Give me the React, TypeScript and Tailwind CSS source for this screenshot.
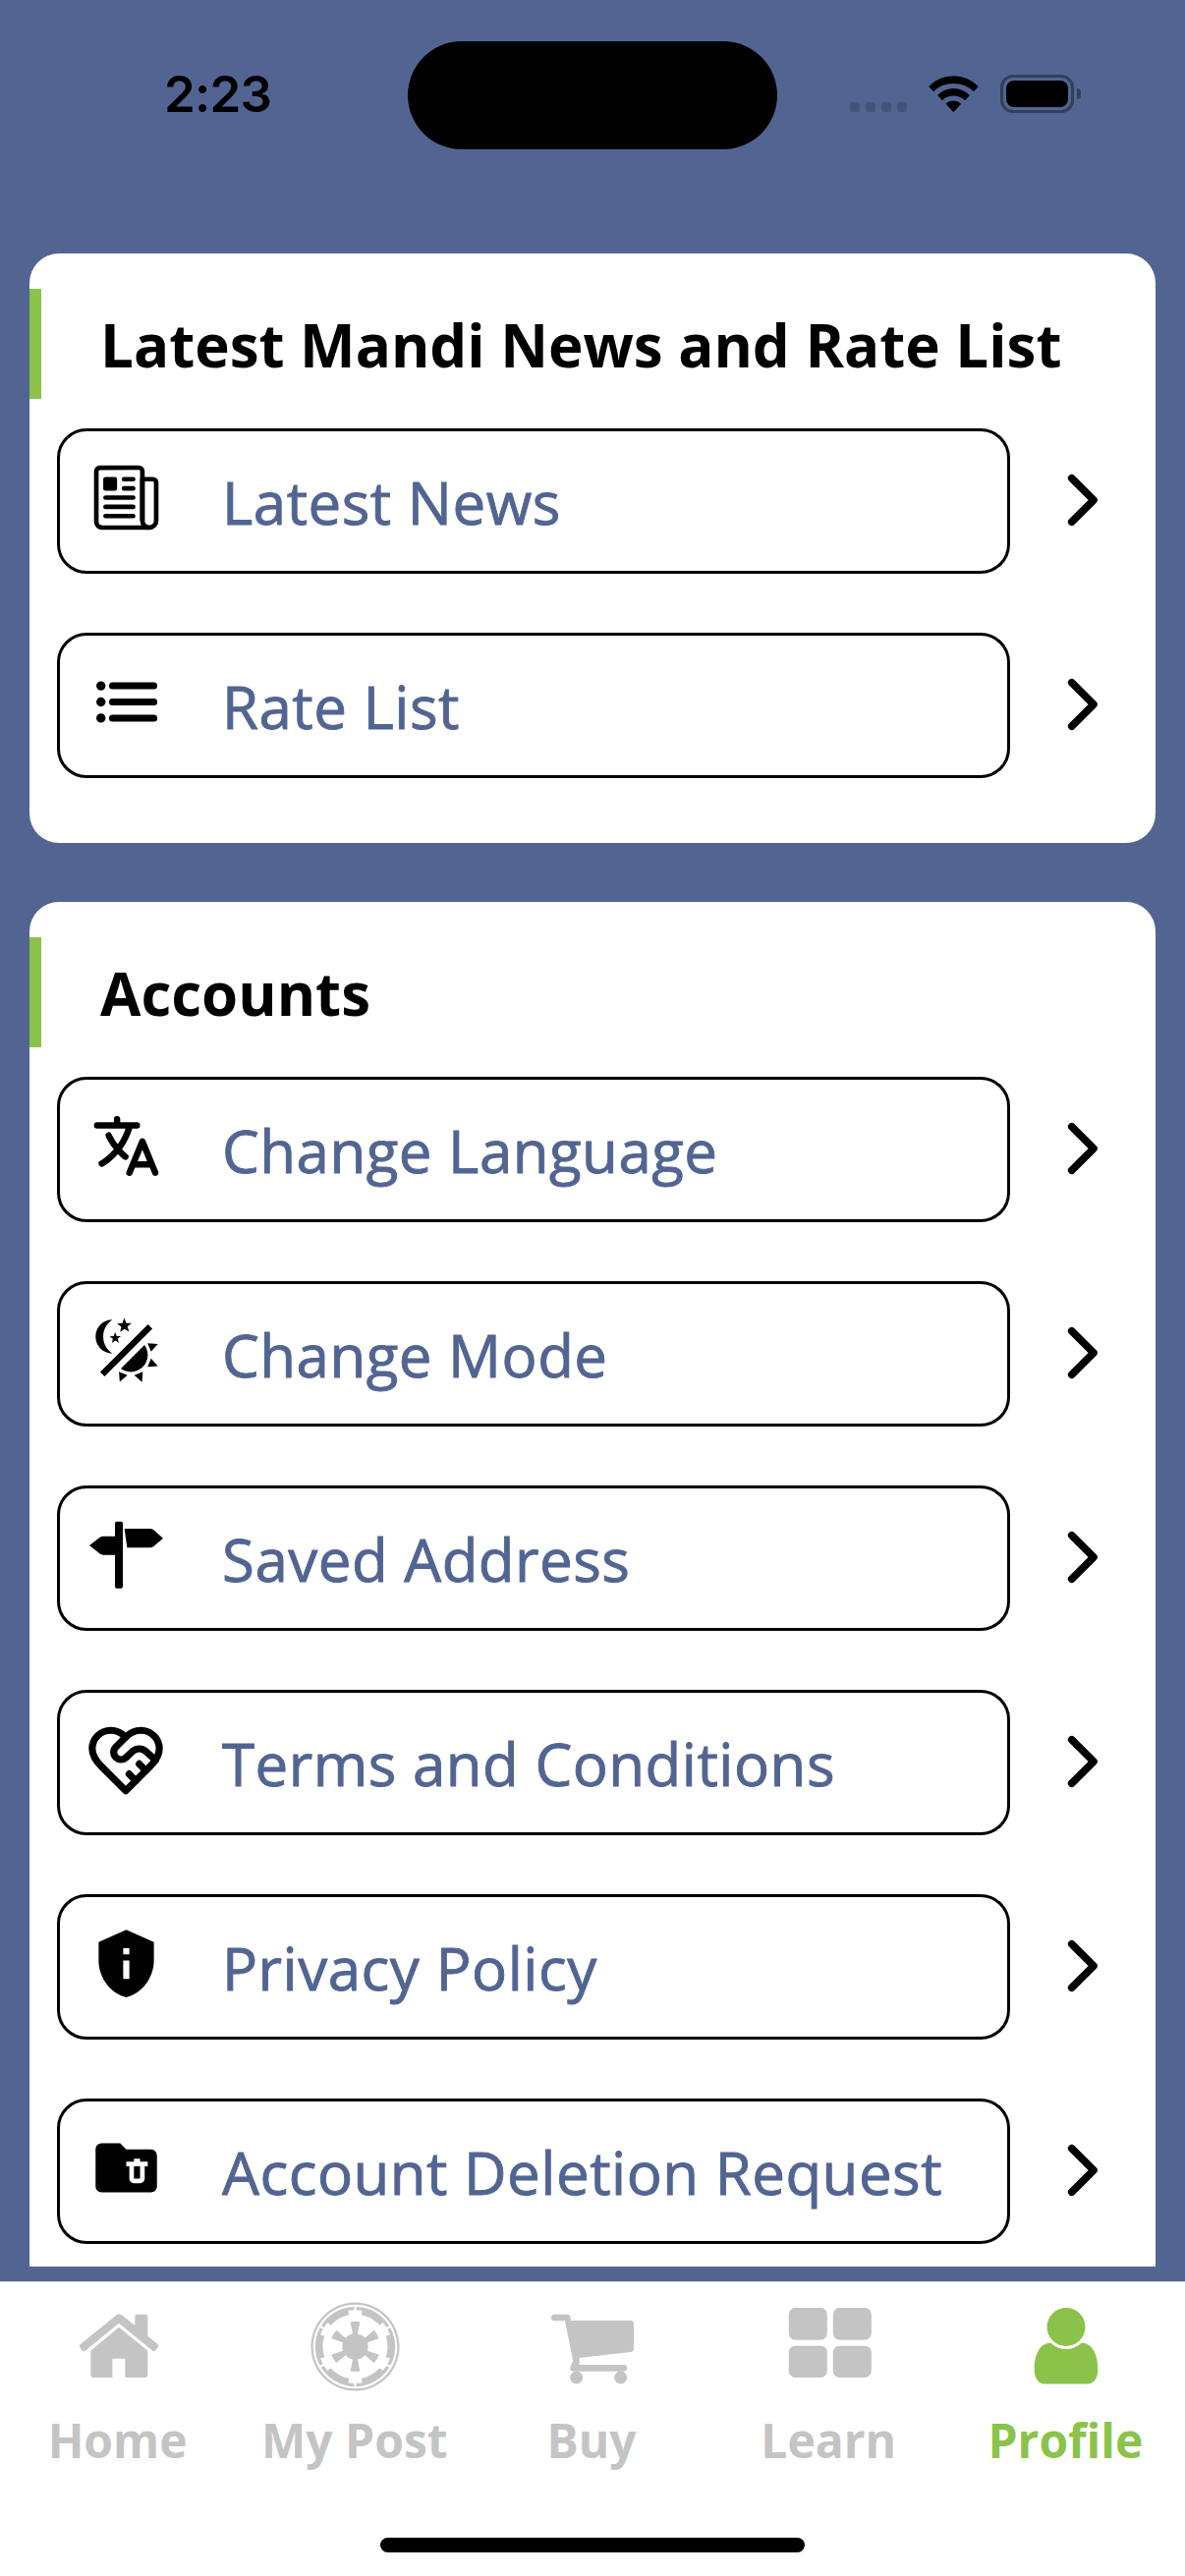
import type { ReactNode } from "react";
import { IoLanguage, IoList, IoNewspaperOutline } from "react-icons/io5";
import { MdFolderDelete, MdPrivacyTip } from "react-icons/md";
import { FaEmpire } from "react-icons/fa";
import { LuHeartHandshake } from "react-icons/lu";

type Item = { label: string; icon: ReactNode };

function LightDarkIcon() {
  return (
    <svg viewBox="0 0 24 24" className="size-[75px]" fill="currentColor">
      <path d="M7.5 2C5.71 3.15 4.5 5.18 4.5 7.5S5.71 11.85 7.53 13C4.46 13 2 10.54 2 7.5A5.5 5.5 0 0 1 7.5 2M19.07 3.5L20.5 4.93L4.93 20.5L3.5 19.07L19.07 3.5M12.89 5.93L11.41 5L9.97 6L10.39 4.3L9 3.24L10.75 3.12L11.33 1.47L12 3.1L13.73 3.13L12.38 4.26L12.89 5.93M9.59 9.54L8.43 8.81L7.31 9.59L7.65 8.27L6.56 7.44L7.92 7.35L8.37 6.06L8.88 7.33L10.24 7.36L9.19 8.23L9.59 9.54M19 13.5A5.5 5.5 0 0 1 13.5 19C12.28 19 11.15 18.6 10.24 17.93L17.93 10.24C18.6 11.15 19 12.28 19 13.5M14.6 20.08L17.37 18.93L17.13 22.28L14.6 20.08M18.93 17.38L20.08 14.61L22.28 17.15L18.93 17.38M20.08 12.42L18.94 9.64L22.28 9.88L20.08 12.42M9.63 18.93L12.4 20.08L9.87 22.27L9.63 18.93Z" />
    </svg>
  );
}

function SignpostIcon() {
  return (
    <svg viewBox="93 136 225 225" className="size-[75px]" fill="currentColor">
      <path d="M176 147H190Q195 147 195 152V346Q195 351 190 351H176Q171 351 171 346V249H135Q129 249 124 245L93 220L124 196Q129 192 135 192H171V152Q171 147 176 147Z" />
      <path d="M200 169H278Q284 169 288 172L318 198L289 223Q284 227 278 227H208Z" />
    </svg>
  );
}

function Chevron() {
  return (
    <svg viewBox="0 0 34 56" className="h-14 w-[34px]" fill="none" stroke="#000" strokeWidth="7.6" strokeLinecap="round" strokeLinejoin="round">
      <path d="M5.7 5.7L28 28L5.7 50.3" />
    </svg>
  );
}

function HomeIcon() {
  return (
    <svg viewBox="47 39 270 270" className="size-[90px]" fill="currentColor">
      <path d="M64 169L173 80Q182 73 192 80L231 111V83Q231 77 237 77H264Q270 77 270 83V143L301 169Q305 173 302 177L294 187Q290 192 285 188L182 104L79 188Q74 192 70 187L62 178Q59 173 64 169Z" />
      <path d="M182 116L270 188V260Q270 270 260 270H201V212H162V270H106Q96 270 96 260V188Z" />
    </svg>
  );
}

function CartIcon() {
  return (
    <svg viewBox="54 39 270 270" className="size-[90px]" fill="currentColor">
      <path d="M73 77H112Q120 77 121 85L123 96H305Q315 96 315 106V182Q315 191 306 192L148 210L150 222L147 231H284A10 10 0 0 1 284 251H130Q119 250 121 240Q123 230 130 221L105 97H73A10 10 0 0 1 73 77Z" />
      <circle cx="140" cy="270" r="19.5" />
      <circle cx="275" cy="270" r="19.5" />
    </svg>
  );
}

function TilesIcon() {
  return (
    <svg viewBox="777.6 39 270 270" className="size-[90px]" fill="currentColor">
      <rect x="789" y="57" width="117" height="98" rx="20" />
      <rect x="924" y="57" width="117" height="98" rx="20" />
      <rect x="789" y="173" width="117" height="97" rx="20" />
      <rect x="924" y="173" width="117" height="97" rx="20" />
    </svg>
  );
}

function PersonIcon() {
  return (
    <svg viewBox="0 0 90 90" className="size-[90px]" fill="currentColor">
      <circle cx="45" cy="25.5" r="19.5" />
      <path d="M29.3 41.8A22.7 22.7 0 0 0 60.7 41.8C72 41.8 77.3 54 77.3 69C77.3 78 73 83.4 67 83.4H23C17 83.4 12.7 78 12.7 69C12.7 54 18 41.8 29.3 41.8Z" />
    </svg>
  );
}

const news: Item[] = [
  { label: "Latest News", icon: <IoNewspaperOutline size={75} /> },
  { label: "Rate List", icon: <IoList size={75} /> },
];

const accounts: Item[] = [
  { label: "Change Language", icon: <IoLanguage size={75} /> },
  { label: "Change Mode", icon: <LightDarkIcon /> },
  { label: "Saved Address", icon: <SignpostIcon /> },
  { label: "Terms and Conditions", icon: <LuHeartHandshake size={82} strokeWidth={2.1} className="mt-[3px] mr-px shrink-0" /> },
  { label: "Privacy Policy", icon: <MdPrivacyTip size={75} /> },
  { label: "Account Deletion Request", icon: <MdFolderDelete size={75} /> },
];

const tabs = [
  { label: "Home", icon: <HomeIcon /> },
  { label: "My Post", icon: <FaEmpire size={93} /> },
  { label: "Buy", icon: <CartIcon /> },
  { label: "Learn", icon: <TilesIcon /> },
  { label: "Profile", icon: <PersonIcon />, active: true },
];

function Card({ title, items }: { title: string; items: Item[] }) {
  return (
    <section className="shrink-0 rounded-[30px] bg-white pt-9 pb-[66px]">
      <h2 className="h-28 border-l-12 border-[#8bc34a] pt-4 pl-15 text-[60px] leading-[82px] font-bold whitespace-nowrap text-black">{title}</h2>
      <ul className="mt-[30px] flex flex-col gap-[60px] pl-7">
        {items.map((it) => (
          <li key={it.label} className="flex h-37 items-center">
            <div className="flex h-37 w-[970px] items-center rounded-[30px] border-3 border-black pl-[30px]">
              <span className="mb-2 flex size-[75px] items-center justify-center text-black">{it.icon}</span>
              <span className="mt-0.5 ml-[60px] text-[60px] leading-[82px] tracking-[0.5px] whitespace-nowrap text-[#526592] [-webkit-text-stroke:0.9px_#526592]">{it.label}</span>
            </div>
            <span className="ml-[57px] -mt-0.5">
              <Chevron />
            </span>
          </li>
        ))}
      </ul>
    </section>
  );
}

function StatusBar() {
  return (
    <header className="flex h-[258px] shrink-0 items-start pl-[167px]">
      <time className="mt-[64px] w-[248px] font-['Inter',sans-serif] text-[51px] leading-[64px] font-semibold tracking-[-0.8px] text-black">2:23</time>
      <div className="mt-[42px] h-[110px] w-[376px] rounded-full bg-black" />
      <div className="mt-[104px] ml-[74px] flex gap-1.5">
        {[0, 1, 2, 3].map((i) => (
          <i key={i} className="size-2.5 rounded-[3px] bg-[#445378]" />
        ))}
      </div>
      <svg viewBox="315 80 153 113" className="mt-[77px] ml-[22px] h-[37.5px] w-[51px]">
        <path d="M315 113Q347 81 391 81T468 113L453 129Q428 104 391 104T330 129Z" />
        <path d="M342 140Q363 119 391 119T441 140L426 156Q412 142 391 142T357 156Z" />
        <path d="M368 167Q378 157 391 157T415 167L391 192Z" />
      </svg>
      <div className="mt-[76px] ml-[22px] flex h-[39px] w-[75px] items-center justify-center rounded-[13px] border-3 border-[#333f5b]">
        <div className="h-[27px] w-[63px] shrink-0 rounded-[8px] bg-black" />
      </div>
      <div className="mt-[90px] ml-[3px] h-[11px] w-1 rounded-r-full bg-[#333f5b]" />
    </header>
  );
}

export default function App() {
  return (
    <div className="flex h-[2622px] w-[1206px] flex-col overflow-hidden bg-[#526592] font-['Open_Sans','Noto_Sans',sans-serif]">
      <StatusBar />
      <main className="flex h-[2049px] shrink-0 flex-col gap-[60px] overflow-hidden px-[30px]">
        <Card title="Latest Mandi News and Rate List" items={news} />
        <Card title="Accounts" items={accounts} />
      </main>
      <nav className="mt-[15px] flex h-[300px] flex-col items-center border-t border-[#d8d8d8] bg-white">
        <div className="grid w-full grid-cols-5 pt-5">
          {tabs.map((t) => (
            <div key={t.label} className={t.active ? "flex flex-col items-center text-[#8bc34a]" : "flex flex-col items-center text-[#c4c4c4]"}>
              <span className="flex size-[90px] items-center justify-center *:shrink-0">{t.icon}</span>
              <span className="mt-[18px] mr-0.5 text-[48px] leading-[66px] font-bold whitespace-nowrap">{t.label}</span>
            </div>
          ))}
        </div>
        <div className="mt-[66px] h-[15px] w-[432px] rounded-full bg-black" />
      </nav>
    </div>
  );
}
